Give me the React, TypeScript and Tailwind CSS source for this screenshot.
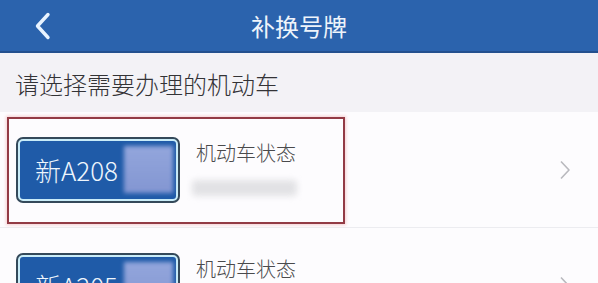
const FONT = '"Noto Sans CJK SC", "Noto Sans", sans-serif';

const VEHICLES = [
  { prefix: '新', plate: 'A208', highlighted: true },
  { prefix: '新', plate: 'A205', highlighted: false },
];

function BackIcon() {
  return (
    <svg width="18" height="28" viewBox="0 0 18 28" fill="none">
      <polyline
        points="14,2.5 3.5,14 14,25.5"
        stroke="#e8f3ff"
        strokeWidth="3.4"
        strokeLinecap="round"
        strokeLinejoin="round"
      />
    </svg>
  );
}

function ChevronRight() {
  return (
    <svg width="12" height="20" viewBox="0 0 12 20" fill="none">
      <polyline points="2,1.5 10,10 2,18.5" stroke="#b9b9be" strokeWidth="1.6" strokeLinejoin="round" />
    </svg>
  );
}

function Plate({ prefix, plate }: { prefix: string; plate: string }) {
  return (
    <div className="w-[164px] h-[66px] shrink-0 rounded-[7px] bg-[#34495a] p-[2px]">
      <div className="flex h-full items-center rounded-[5px] border-2 border-[#c9ecf8] bg-[#1f5ba8] pl-[15px] pr-[3px]">
        <span className="text-[26px] font-light leading-none text-[#eef6fd] whitespace-nowrap">
          {prefix}
          {plate}
        </span>
        <div className="ml-auto h-[47px] w-[49px] bg-gradient-to-b from-[#93a6dc] to-[#8396d2] blur-[2px]" />
      </div>
    </div>
  );
}

function VehicleRow({ prefix, plate, highlighted }: { prefix: string; plate: string; highlighted: boolean }) {
  return (
    <div className="relative flex h-[116px] shrink-0 items-center border-b border-[#ececf0] bg-[#fdfcfe] pl-[16px] pr-[27px]">
      {highlighted && (
        <div className="pointer-events-none absolute left-[7px] top-[5px] h-[107px] w-[338px] border-2 border-[#933b45] shadow-[0_0_3px_1px_#f5cdd0]" />
      )}
      <Plate prefix={prefix} plate={plate} />
      <div className="ml-[16px] flex flex-col">
        <span className="text-[20px] font-light leading-[20px] text-[#4a4a4c]">机动车状态</span>
        <div className="mt-[17px] ml-[-4px] h-[16px] w-[105px] rounded bg-[#e2e2e5] blur-[3px]" />
      </div>
      <div className="ml-auto">
        <ChevronRight />
      </div>
    </div>
  );
}

export default function App() {
  return (
    <div className="flex h-[283px] w-[598px] flex-col overflow-hidden bg-[#f3f2f6]" style={{ fontFamily: FONT }}>
      <div className="grid h-[53px] shrink-0 grid-cols-[1fr_auto_1fr] items-center border-b-2 border-[#23508e] bg-[#2b63ad]">
        <div className="pl-[34px] pt-[1px]">
          <BackIcon />
        </div>
        <h1 className="text-[24px] font-normal leading-none text-[#eef4fb]">补换号牌</h1>
        <div />
      </div>

      <div className="flex h-[59px] shrink-0 items-center pl-[15px] pt-[2px]">
        <p className="text-[24px] font-light leading-none text-[#333336]">请选择需要办理的机动车</p>
      </div>

      {VEHICLES.map((v) => (
        <VehicleRow key={v.plate} {...v} />
      ))}
    </div>
  );
}
